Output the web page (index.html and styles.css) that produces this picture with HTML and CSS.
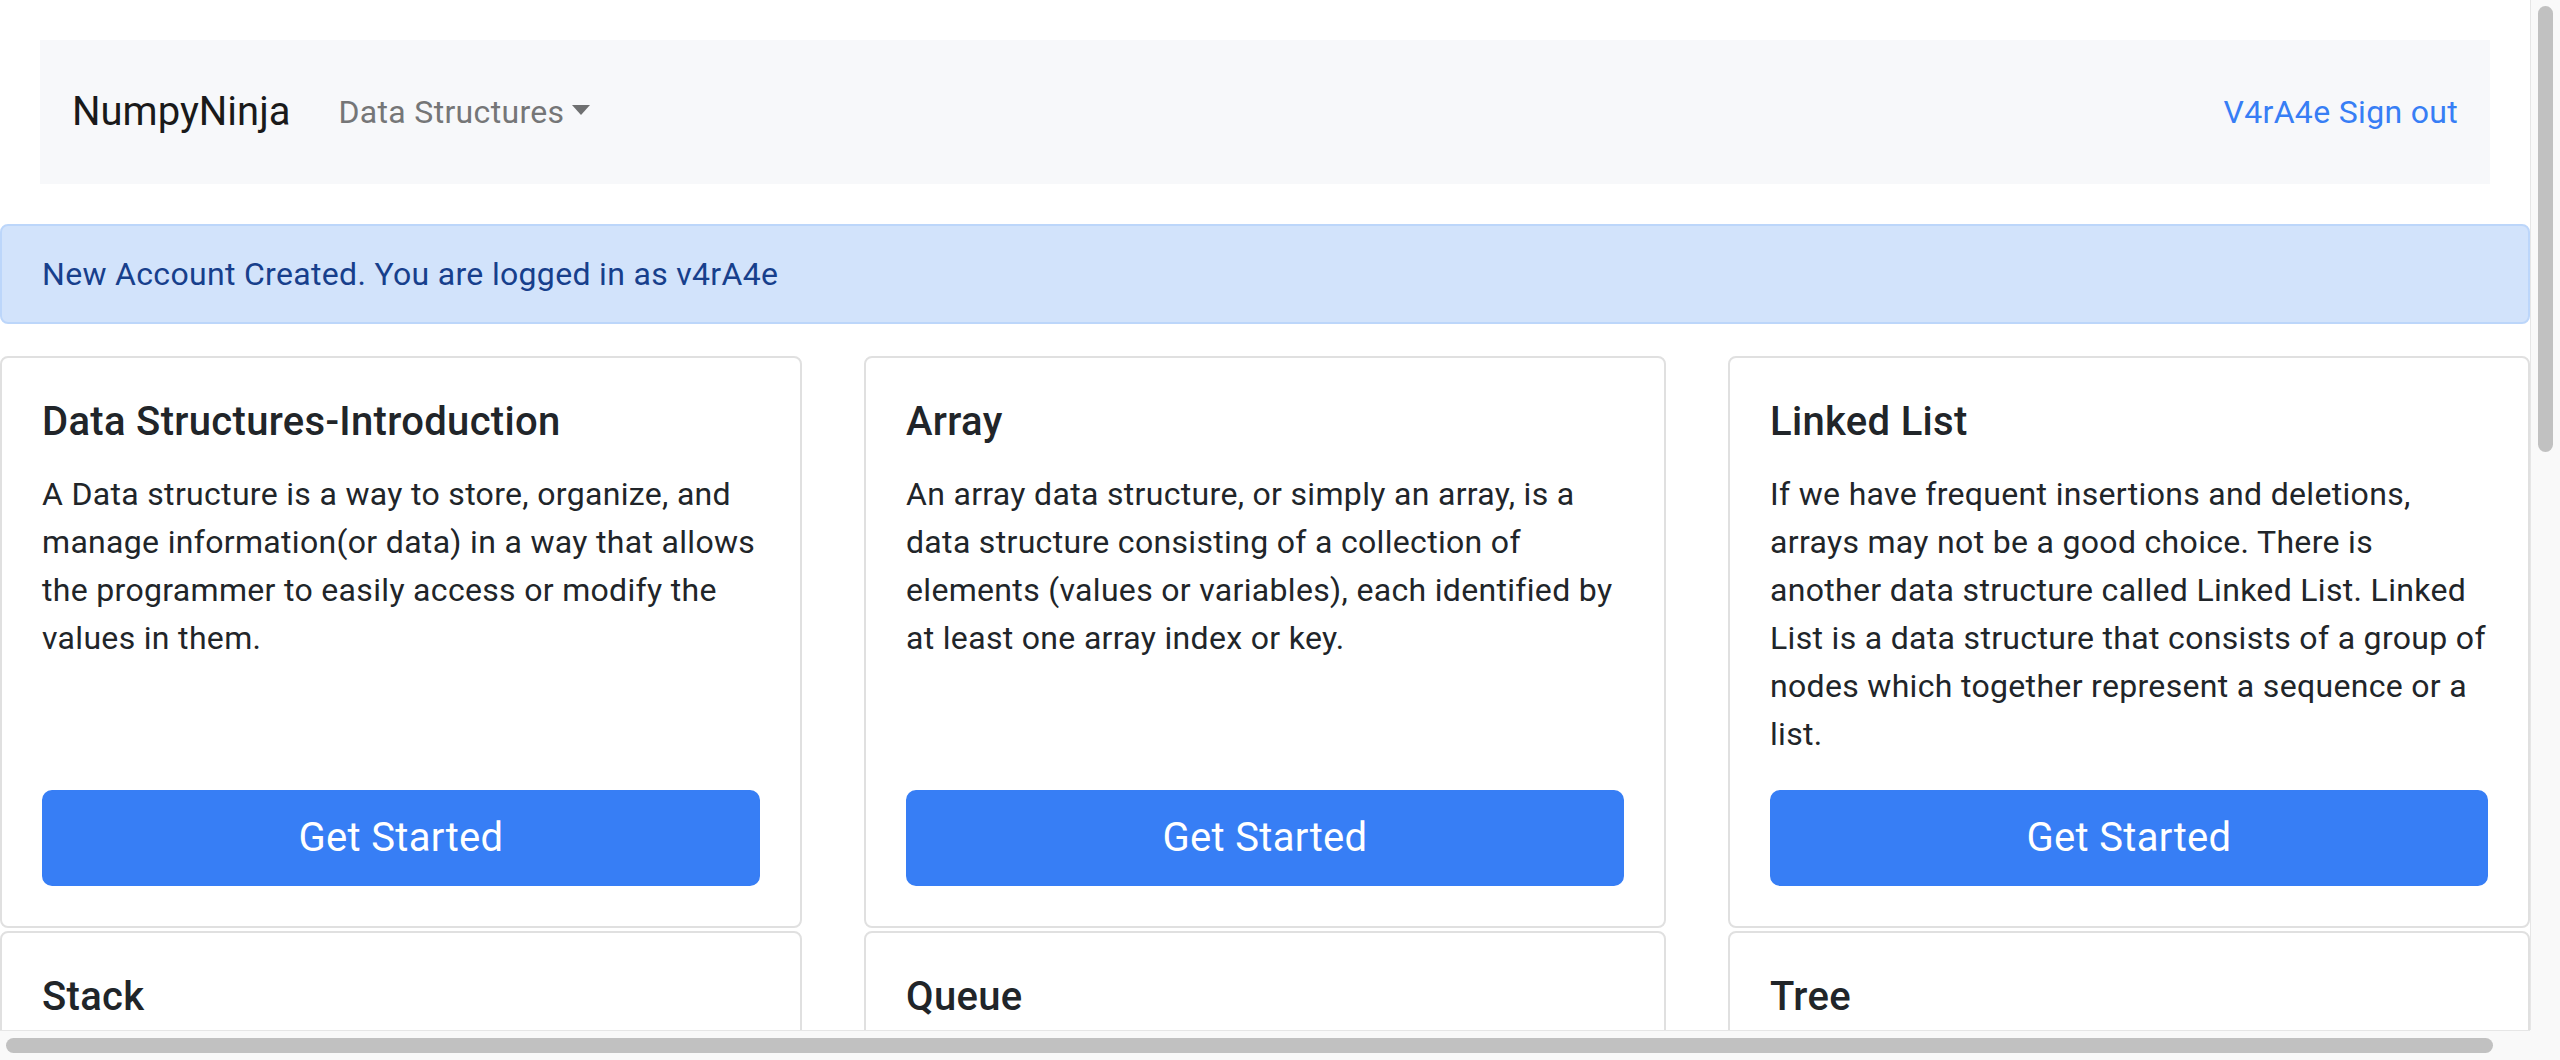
FILE: index.html
```html
<!DOCTYPE html>
<html lang="en">
<head>
<meta charset="utf-8">
<title>NumpyNinja</title>
<link rel="stylesheet" href="styles.css">
</head>
<body>
<div class="window">
  <main class="viewport">
    <nav class="navbar">
      <a class="brand" href="#">NumpyNinja</a>
      <div class="nav-item">
        <a class="nav-link dropdown-toggle" href="#">Data Structures</a>
      </div>
      <a class="user-link" href="#">V4rA4e Sign out</a>
    </nav>

    <div class="alert">New Account Created. You are logged in as v4rA4e</div>

    <div class="cards">
      <div class="card">
        <h5 class="card-title">Data Structures-Introduction</h5>
        <p class="card-text">A Data structure is a way to store, organize, and manage information(or data) in a way that allows the programmer to easily access or modify the values in them.</p>
        <a class="btn" href="#">Get Started</a>
      </div>
      <div class="card">
        <h5 class="card-title">Array</h5>
        <p class="card-text">An array data structure, or simply an array, is a data structure consisting of a collection of elements (values or variables), each identified by at least one array index or key.</p>
        <a class="btn" href="#">Get Started</a>
      </div>
      <div class="card">
        <h5 class="card-title">Linked List</h5>
        <p class="card-text">If we have frequent insertions and deletions, arrays may not be a good choice. There is another data structure called Linked List. Linked List is a data structure that consists of a group of nodes which together represent a sequence or a list.</p>
        <a class="btn" href="#">Get Started</a>
      </div>
      <div class="card">
        <h5 class="card-title">Stack</h5>
        <p class="card-text">A stack is a linear data structure that follows a particular order in which the operations are performed. The order may be LIFO (Last In First Out).</p>
        <a class="btn" href="#">Get Started</a>
      </div>
      <div class="card">
        <h5 class="card-title">Queue</h5>
        <p class="card-text">A queue is a linear structure which follows a particular order in which the operations are performed. The order is First In First Out (FIFO).</p>
        <a class="btn" href="#">Get Started</a>
      </div>
      <div class="card">
        <h5 class="card-title">Tree</h5>
        <p class="card-text">A tree is a nonlinear hierarchical data structure that consists of nodes connected by edges.</p>
        <a class="btn" href="#">Get Started</a>
      </div>
    </div>
  </main>
  <div class="vscroll"><div class="vthumb"></div></div>
  <div class="hscroll"><div class="hthumb"></div></div>
  <div class="corner"></div>
</div>
</body>
</html>
```

FILE: styles.css
```css
* { box-sizing: border-box; }

html, body {
  margin: 0;
  padding: 0;
  background: #ffffff;
}

body {
  font-family: Roboto, Inter, "Liberation Sans", sans-serif;
  font-size: 32px;
  line-height: 1.5;
  letter-spacing: 0.01em;
  color: #212529;
}

a { text-decoration: none; }

.window {
  width: 2560px;
  height: 1060px;
  display: grid;
  grid-template-columns: 2530px 30px;
  grid-template-rows: 1030px 30px;
  overflow: hidden;
}

.viewport {
  overflow: hidden;
  background: #ffffff;
}

/* Navbar */
.navbar {
  margin: 40px 40px;
  padding: 32px;
  background: #f7f8fa;
  display: flex;
  align-items: center;
  height: 144px;
}

.brand {
  font-size: 40px;
  line-height: 60px;
  padding: 10px 0;
  margin-right: 32px;
  color: #1a1a1a;
  letter-spacing: 0;
}

.nav-link {
  display: inline-block;
  padding: 16px;
  line-height: 48px;
  color: #757677;
}

.dropdown-toggle::after {
  content: "";
  display: inline-block;
  margin-left: 8px;
  vertical-align: 8px;
  border-top: 10px solid #6f7071;
  border-left: 9px solid transparent;
  border-right: 9px solid transparent;
}

.user-link {
  margin-left: auto;
  line-height: 48px;
  color: #377ef5;
}

/* Alert */
.alert {
  margin: 0 0 32px 0;
  padding: 24px 40px;
  background: #d2e3fb;
  border: 2px solid #bcd6fa;
  border-radius: 8px;
  color: #173f8c;
  line-height: 48px;
}

/* Cards */
.cards {
  display: grid;
  grid-template-columns: repeat(3, 802px);
  column-gap: 62px;
  row-gap: 3px;
}

.card {
  display: flex;
  flex-direction: column;
  padding: 40px;
  border: 2px solid #e0e0e0;
  border-radius: 8px;
  background: #ffffff;
}

.card-title {
  margin: 0 0 24px 0;
  font-size: 40px;
  font-weight: 500;
  line-height: 48px;
  color: #212529;
}

.card-text {
  margin: 0 0 32px 0;
  line-height: 48px;
}

.btn {
  margin-top: auto;
  display: block;
  text-align: center;
  font-size: 40px;
  line-height: 60px;
  padding: 16px 32px;
  border: 2px solid #377ef5;
  background: #377ef5;
  color: #ffffff;
  border-radius: 10px;
}

/* Scrollbars */
.vscroll {
  background: #f9f9f9;
  border-left: 1px solid #e6e6e6;
  padding: 6px 6px 0 7px;
}

.vthumb {
  width: 15px;
  height: 446px;
  border-radius: 8px;
  background: #c1c1c1;
}

.hscroll {
  background: #f9f9f9;
  border-top: 1px solid #e6e6e6;
  padding: 7px 0 0 6px;
}

.hthumb {
  width: 2487px;
  height: 15px;
  border-radius: 8px;
  background: #c1c1c1;
}

.corner {
  background: #f9f9f9;
}
```
